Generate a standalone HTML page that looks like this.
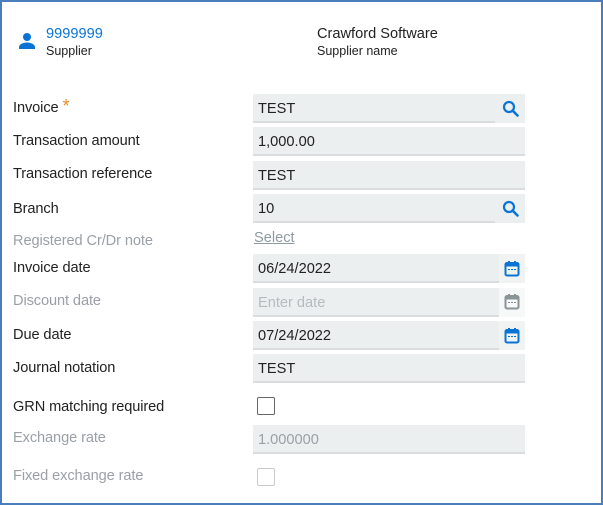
<!DOCTYPE html>
<html><head><meta charset="utf-8"><style>
*{margin:0;padding:0;box-sizing:border-box}
body{width:603px;height:505px;background:#fff;font-family:"Liberation Sans",sans-serif;color:#222;position:relative;overflow:hidden}
.frame{position:absolute;left:0;top:0;width:603px;height:505px;border:2px solid #4a7ebb}
.a{position:absolute;white-space:nowrap}
.lbl{font-size:14.6px;left:13px;letter-spacing:-0.1px}
.dim{color:#9aa0a6}
.f{position:absolute;left:253px;width:272px;height:29px;background:#ebefef;font-size:14.6px;padding:7px 0 0 5px}
.f:after{content:"";position:absolute;left:0;bottom:0;height:2px;background:#d9dddd;width:100%}
.f.ic:after{width:242px}
.f.dt{width:246px}
.f.dt:after{width:100%}
.icb{position:absolute;left:499px;width:26px;height:29px;background:#f1f3f3}
.cb{position:absolute;left:257px;width:18px;height:18px;border:1.5px solid #666;border-radius:2px}
.cb.dim{border-color:#c8cccc}
</style></head><body>
<div class="frame"></div>
<svg class="a" style="left:17px;top:31px" width="20" height="20" viewBox="0 0 20 20"><circle cx="10" cy="6" r="4" fill="#0a74d6"/><path d="M2 18v-2c0-3 5-4.5 8-4.5s8 1.5 8 4.5v2z" fill="#0a74d6"/></svg>
<div class="a" style="left:46px;top:26px;font-size:14.6px;color:#0a74d6">9999999</div>
<div class="a" style="left:46px;top:44px;font-size:12.5px">Supplier</div>
<div class="a" style="left:317px;top:26px;font-size:14.6px">Crawford Software</div>
<div class="a" style="left:317px;top:44px;font-size:12.5px">Supplier name</div>

<div class="a lbl" style="top:100px">Invoice <span style="color:#f08a24;font-size:18px;line-height:10px">*</span></div>
<div class="f ic" style="top:94px">TEST</div>
<svg class="a" style="left:502px;top:100px" width="18" height="18" viewBox="0 0 18 18"><circle cx="7" cy="7" r="5" fill="none" stroke="#0a74d6" stroke-width="2.2"/><path d="M10.5 10.5l5 5" stroke="#0a74d6" stroke-width="2.6" stroke-linecap="round"/></svg>

<div class="a lbl" style="top:133px">Transaction amount</div>
<div class="f" style="top:127px">1,000.00</div>
<div class="a lbl" style="top:166px">Transaction reference</div>
<div class="f" style="top:161px">TEST</div>
<div class="a lbl" style="top:201px">Branch</div>
<div class="f ic" style="top:194px">10</div>
<svg class="a" style="left:502px;top:200px" width="18" height="18" viewBox="0 0 18 18"><circle cx="7" cy="7" r="5" fill="none" stroke="#0a74d6" stroke-width="2.2"/><path d="M10.5 10.5l5 5" stroke="#0a74d6" stroke-width="2.6" stroke-linecap="round"/></svg>

<div class="a lbl dim" style="top:233px">Registered Cr/Dr note</div>
<div class="a dim" style="left:254px;top:230px;font-size:14.6px;text-decoration:underline;color:#8e9aa0">Select</div>

<div class="a lbl" style="top:260px">Invoice date</div>
<div class="f dt" style="top:254px">06/24/2022</div>
<div class="icb" style="top:254px"></div>
<svg class="a" style="left:504px;top:260px" width="16" height="17" viewBox="0 0 16 17"><rect x="1.5" y="3" width="13" height="12.5" rx="1.5" fill="none" stroke="#0a74d6" stroke-width="2"/><rect x="1.5" y="3" width="13" height="3.5" fill="#0a74d6"/><rect x="4" y="1" width="2" height="3" fill="#0a74d6"/><rect x="10" y="1" width="2" height="3" fill="#0a74d6"/><path d="M4 9.5h8" stroke="#0a74d6" stroke-dasharray="2 1"/></svg>

<div class="a lbl dim" style="top:293px">Discount date</div>
<div class="f dt" style="top:288px;color:#b5bcbe">Enter date</div>
<div class="icb" style="top:288px;background:#f7f8f8"></div>
<svg class="a" style="left:504px;top:293px" width="16" height="17" viewBox="0 0 16 17"><rect x="1.5" y="3" width="13" height="12.5" rx="1.5" fill="none" stroke="#8a9496" stroke-width="2"/><rect x="1.5" y="3" width="13" height="3.5" fill="#8a9496"/><rect x="4" y="1" width="2" height="3" fill="#8a9496"/><rect x="10" y="1" width="2" height="3" fill="#8a9496"/><path d="M4 9.5h8" stroke="#8a9496" stroke-dasharray="2 1"/></svg>

<div class="a lbl" style="top:327px">Due date</div>
<div class="f dt" style="top:321px">07/24/2022</div>
<div class="icb" style="top:321px"></div>
<svg class="a" style="left:504px;top:327px" width="16" height="17" viewBox="0 0 16 17"><rect x="1.5" y="3" width="13" height="12.5" rx="1.5" fill="none" stroke="#0a74d6" stroke-width="2"/><rect x="1.5" y="3" width="13" height="3.5" fill="#0a74d6"/><rect x="4" y="1" width="2" height="3" fill="#0a74d6"/><rect x="10" y="1" width="2" height="3" fill="#0a74d6"/><path d="M4 9.5h8" stroke="#0a74d6" stroke-dasharray="2 1"/></svg>

<div class="a lbl" style="top:360px">Journal notation</div>
<div class="f" style="top:354px">TEST</div>

<div class="a lbl" style="top:399px">GRN matching required</div>
<div class="cb" style="top:397px"></div>
<div class="a lbl dim" style="top:430px">Exchange rate</div>
<div class="f" style="top:425px;color:#9aa0a6">1.000000</div>
<div class="a lbl dim" style="top:468px">Fixed exchange rate</div>
<div class="cb dim" style="top:468px"></div>
</body></html>
